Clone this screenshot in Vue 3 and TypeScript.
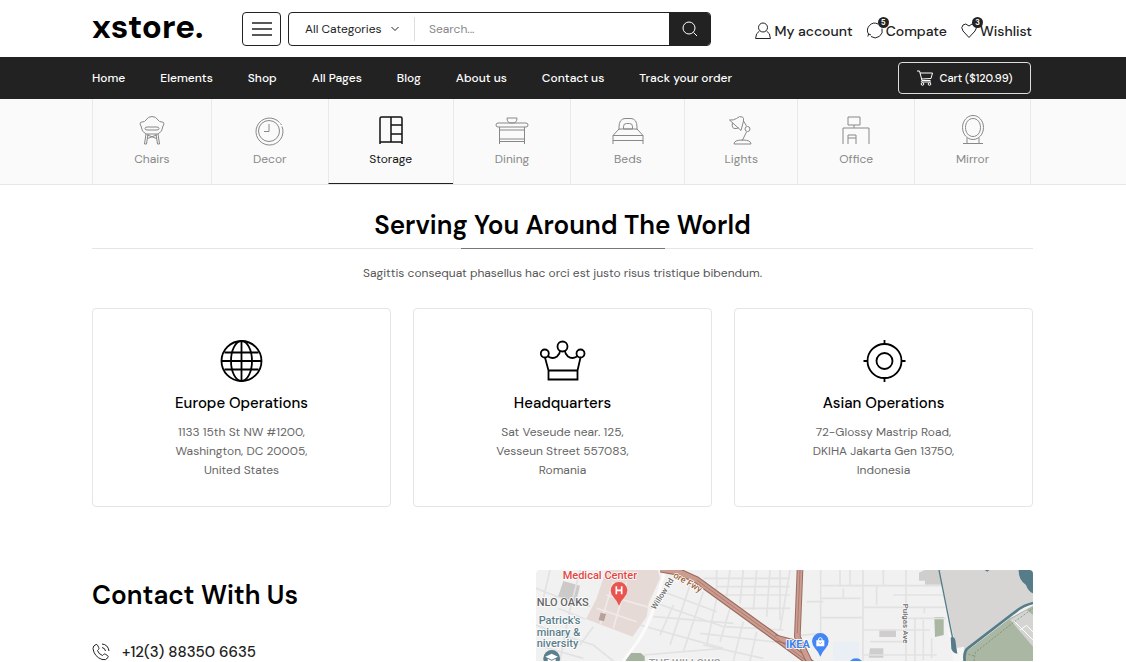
<script setup lang="ts">
import { ref } from 'vue'

interface Category {
  name: string
  icon: string
}

interface Office {
  title: string
  icon: 'globe' | 'crown' | 'target'
  lines: string[]
}

const links: string[] = ['Home', 'Elements', 'Shop', 'All Pages', 'Blog', 'About us', 'Contact us', 'Track your order']

// Outline of each category icon on a 36 x 36 grid
const categories: Category[] = [
  {
    name: 'Chairs',
    icon: 'M6 12q0-2 2-2q3 0 4-2q2-3.500 6-3.500t6 3.500q1 2 4 2q2 0 2 2l-1 2q-.5 6-5 8H12q-4.500-2-5-8zM13 15h10q2 0 2 1.500t-2 1.500H13q-2 0-2-1.500t2-1.500zM12 22l-1.500 10h2L14 22M24 22l1.500 10h-2L22 22M13.500 23l9 3.500M22.500 23l-9 3.500',
  },
  {
    name: 'Decor',
    icon: 'M30 14.500A13.500 13.500 0 1 1 27.500 10.500M28.500 11.500l1 1.500M17 8.500a10.500 10.500 0 1 1 0 21a10.500 10.500 0 1 1 0-21zM17 12v7.500H12',
  },
  {
    name: 'Storage',
    icon: 'M7 32V6.500q0-1.500 1.500-1.500h19q1.500 0 1.500 1.500V32M7 30h22M18 5v25M18 13h11M18 22h11',
  },
  {
    name: 'Dining',
    icon: 'M13 6h10q0 5-4 5h-2q-4 0-4-5zM4 11h28q2 0 2 2t-2 2H4q-2 0-2-2t2-2zM5.500 15v17M30.500 15v17M5.500 18h25M5.500 27h25M5.500 29.500h25',
  },
  {
    name: 'Beds',
    icon: 'M9 18v-3q0-8 6-8.500h6q6 .5 6 8.500v3M13.500 17v-2.500q0-3 3-3h3q3 0 3 3V17zM9 17h18l6 6.500H3zM3 32v-8.500h30V32M3 28.500h30',
  },
  {
    name: 'Lights',
    icon: 'M6.500 8q4 .5 7-1.500q3-3 6-1.500q1.500 1 1 4l-2.500 9.500zM9.500 11q-1.500 6 3.500 5.500q2 0 2.500-1M20.500 9l3 5M23.500 20l-4.500 9M24.500 14.500a2.500 2.500 0 1 1 0 5a2.500 2.500 0 1 1 0-5zM11 32q0-4 8.500-4t8.500 4z',
  },
  {
    name: 'Office',
    icon: 'M10 5h12v8H10zM16 13v3M5 32V16H31v16M10 32V23h8v9M10 26h8',
  },
  {
    name: 'Mirror',
    icon: 'M18 3.500c6 0 10.500 5.500 10.500 12s-4.500 12-10.500 12s-10.500-5.500-10.500-12s4.500-12 10.500-12zM18 6.500c4.500 0 7.500 4 7.500 9s-3 9-7.500 9s-7.500-4-7.500-9s3-9 7.500-9zM12 26v5M24 26v5M8 31.500h20',
  },
]

const offices: Office[] = [
  { title: 'Europe Operations', icon: 'globe', lines: ['1133 15th St NW #1200,', 'Washington, DC 20005,', 'United States'] },
  { title: 'Headquarters', icon: 'crown', lines: ['Sat Veseude near. 125,', 'Vesseun Street 557083,', 'Romania'] },
  { title: 'Asian Operations', icon: 'target', lines: ['72-Glossy Mastrip Road,', 'DKIHA Jakarta Gen 13750,', 'Indonesia'] },
]

const active = ref<string>('Storage')
const query = ref<string>('')
</script>

<template>
  <div class="page">
    <header class="top wrap">
      <a class="logo" href="#">xstore.</a>
      <button class="burger" type="button" aria-label="Menu">
        <svg width="20" height="14" viewBox="0 0 20 14"><path d="M0 1h20M0 7h20M0 13h20" /></svg>
      </button>
      <form class="search" role="search" @submit.prevent>
        <div class="pick">
          <select aria-label="Category">
            <option>All Categories</option>
          </select>
          <svg width="8" height="6" viewBox="0 0 8 6"><path d="M.5 1L4 4.500L7.500 1" /></svg>
        </div>
        <input v-model="query" type="text" placeholder="Search..." aria-label="Search" />
        <button type="submit" aria-label="Search">
          <svg width="16" height="16" viewBox="0 0 16 16"><circle cx="7" cy="7" r="6" /><path d="M11.500 11.500L15 15" /></svg>
        </button>
      </form>
      <div class="user">
        <a href="#">
          <svg width="16" height="18" viewBox="0 0 16 18"><circle cx="8" cy="5.500" r="4.500" /><path d="M4.500 9Q.6 11 .6 16.500h14.800Q15.400 11 11.500 9" /></svg>
          <span>My account</span>
        </a>
        <a href="#">
          <svg width="16" height="18" viewBox="0 0 16 18"><path d="M11 2A7.200 7.200 0 0 0 1.800 12.500M.8 14.500l.8-2.500 2.400 1M4 14.500A7.200 7.200 0 0 0 15 6.500" /></svg>
          <span>Compate</span>
          <i class="badge">5</i>
        </a>
        <a href="#">
          <svg width="16" height="18" viewBox="0 0 16 18"><path d="M8 15.500L2 9Q-.5 5.500 2 3T8 4Q11 .5 14 3t0 6z" /></svg>
          <span>Wishlist</span>
          <i class="badge">3</i>
        </a>
      </div>
    </header>

    <nav class="bar">
      <div class="wrap bar-in">
        <ul>
          <li v-for="l in links" :key="l"><a href="#">{{ l }}</a></li>
        </ul>
        <button class="cart" type="button">
          <svg width="16" height="16" viewBox="0 0 16 16">
            <path d="M0 1h2.500l2.500 9.500h8.500M3 3h12.500L14 8.500l-9.500.5M5 10.500q-1.500 1.500 0 1.500h9" />
            <circle cx="5.500" cy="14" r="1.300" /><circle cx="12.500" cy="14" r="1.300" />
          </svg>
          Cart ($120.99)
        </button>
      </div>
    </nav>

    <section class="cats" aria-label="Categories">
      <div class="wrap">
        <div class="cat-grid">
          <a v-for="c in categories" :key="c.name" href="#" :class="{ on: c.name === active }" @click.prevent="active = c.name">
            <svg width="36" height="36" viewBox="0 0 36 36"><path :d="c.icon" /></svg>
            <span>{{ c.name }}</span>
          </a>
        </div>
      </div>
    </section>

    <main class="wrap">
      <h1>Serving You Around The World</h1>
      <div class="rule"><span></span></div>
      <p class="lead">Sagittis consequat phasellus hac orci est justo risus tristique bibendum.</p>

      <div class="cards">
        <article v-for="o in offices" :key="o.title">
          <svg width="46" height="46" viewBox="0 0 46 46">
            <template v-if="o.icon === 'globe'">
              <circle cx="22.500" cy="23" r="20" />
              <ellipse cx="22.500" cy="23" rx="10.500" ry="20" />
              <path d="M22.500 3v40M2.500 23h40M5.500 14.500h34M5.500 31.500h34" />
            </template>
            <template v-else-if="o.icon === 'crown'">
              <circle cx="22.500" cy="8.500" r="5" /><circle cx="4.800" cy="15.500" r="4" /><circle cx="40.500" cy="15.500" r="4" />
              <path d="M5 19.500L8.500 32.500V41.500h29V32.500L40.500 19.500M8.500 32.500h29M8 18.500q5 3 9 0q3-2.500 3-5.500M37 18.500q-5 3-9 0q-3-2.500-3-5.500" />
            </template>
            <template v-else>
              <circle cx="23.500" cy="23" r="17" /><circle cx="23.500" cy="23" r="8" />
              <path d="M23.500 2v4M23.500 40v4M2.500 23h4M40.500 23h4" />
            </template>
          </svg>
          <h2>{{ o.title }}</h2>
          <p><template v-for="t in o.lines" :key="t">{{ t }}<br /></template></p>
        </article>
      </div>

      <div class="contact">
        <div>
          <h1 class="left">Contact With Us</h1>
          <a class="phone" href="tel:+123883506635">
            <svg width="18" height="18" viewBox="0 0 18 18">
              <path d="M4 1.500Q1 2.500 1 5.500q1 8 9 11q4 1.200 6-2q.6-1-.3-1.800l-2.400-1.500q-1-.6-1.800.3l-1 1Q6.500 11 5.500 7.500l1-1q.9-.8.3-1.800L5.500 2.200Q5 1.200 4 1.500zM10 1q6 .5 7 7M10 4.500q3 .5 3.500 3.500" />
            </svg>
            +12(3) 88350 6635
          </a>
        </div>
        <svg class="map" viewBox="18 15 1491 273" preserveAspectRatio="xMinYMin slice" role="img" aria-label="Map">
          <rect x="18" y="15" width="1491" height="273" fill="#f1f1f1" />
          <path fill="#e6dad7" d="M228 15H384L390 40L356 115L350 155L308 215L168 162L200 100z" />
          <path fill="#cbcac9" d="M100 48L150 62L138 110L84 96z" />
          <path fill="#a4b39d" d="M296 264h36l12 10v14h-58z" />
          <path fill="#cfcecd" d="M1048 194h50v22h-50zM1020 250h40v28h-44zM1185 15h52v44h-52v-12h-18v-24z" />
          <path fill="#e9eff4" d="M910 230h76v56h-76z" />
          <path fill="#a9b7a3" d="M1213 156h28v54l-26 6z" />
          <g class="road">
            <path d="M18 70L84 96L180 124M60 15L40 100M150 15L116 150L90 288M18 180L110 215L190 240L250 288M84 130L165 162M150 240l40-55" />
            <path class="faint" d="M250 50l-40 130M290 50l-40 140M228 90l140 40M200 130l120 40" />
            <path d="M20 240l140 40M340 270l240-20M330 180l250 70" />
            <path d="M380 115l200 70l180 10M370 155l240 20M480 60l-60 180M520 80l-60 180M400 80l160 60M560 100l-30 140M600 130l-30 100M640 170l-30 118M680 200l-20 88M430 120l-40 90M510 205l260 30M520 240l180 40" />
            <path d="M520 40h260M600 15l-10 80M640 15l-10 100M680 15l-10 120M560 15v60M720 15l-10 140M560 90h220M620 130h160M750 15v150M560 65h220" />
            <path d="M872 15v210M999 15v273M1128 15v273M872 62h380M872 158h128M999 127h245M872 100h120M1000 195h200M1128 160h120M1155 160v128M1180 165v120M1205 220v60M780 15l-30 180M830 110h50M930 15v50M960 15v45M940 70v30M870 206l-60 5M1040 60v60M1060 15v45M1183 125v20M1020 230h110M1000 270h220M1090 90h150" />
          </g>
          <path fill="#b7a19b" d="M212 143l16 4l-6 22l-16-4z" />
          <path class="road wide" d="M405 15Q380 110 360 160T308 250L280 288" />
          <path fill="#d6d5d4" d="M1228 15H1509V110Q1480 115 1450 145L1300 265V288L1275 235z" />
          <path fill="#f6f6f6" d="M1250 180L1276 250L1302 245V288h-32z" />
          <path fill="#a9b7a3" d="M1302 265L1440 160L1509 122V288H1302z" />
          <path fill="#d4d4d2" d="M1440 164L1490 135L1509 150V245z" />
          <path stroke="#fff" stroke-width="3" fill="none" d="M1452 168L1509 225M1470 195l20-14l19 20" />
          <path stroke="#738270" stroke-width="2" stroke-dasharray="6 5" fill="none" d="M1332 288L1336 262L1440 180L1509 130M1305 265l28 8" />
          <path stroke="#557c88" stroke-width="8" fill="none" d="M1509 114Q1480 120 1450 145L1316 248Q1300 258 1304 288" />
          <path stroke="#557c88" stroke-width="4" fill="none" d="M1227 15L1274 250" />
          <path fill="#557c88" d="M1262 218q10-6 14 8l6 40q-12 0-18-14zM1466 15h43V85Q1495 80 1488 60Q1465 45 1466 15zM1364 15h14l-6 5z" />
          <path stroke="#9b6d60" stroke-width="22" fill="none" d="M392 12L450 22L500 45L720 205L850 300" />
          <path stroke="#cb9c8f" stroke-width="15" fill="none" d="M392 12L450 22L500 45L720 205L850 300" />
          <path stroke="#9b6d60" stroke-width="20" fill="none" d="M810 15L802 215L840 295M735 218l70 18" />
          <path stroke="#cb9c8f" stroke-width="14" fill="none" d="M810 15L802 215L840 295M735 218l70 18" />
          <path stroke="#9b6d60" stroke-width="2" fill="none" d="M810 15L802 205M500 45L720 205L830 288" />
          <g class="label">
            <text x="98" y="43" class="red">Medical Center</text>
            <text x="20" y="123" class="area">NLO OAKS</text>
            <text x="26" y="178" class="slate">Patrick's</text>
            <text x="20" y="212" class="slate">minary &amp;</text>
            <text x="20" y="246" class="slate">niversity</text>
            <text x="356" y="305" class="area pale">THE WILLOWS</text>
            <text transform="translate(376 135) rotate(-58)" class="street">Willow Rd</text>
            <text transform="translate(428 36) rotate(30)" class="hwy">ore Fwy</text>
            <text transform="translate(1118 116) rotate(90)" class="street">Pulgas Ave</text>
            <text x="768" y="250" class="blue">IKEA</text>
          </g>
          <path fill="#e9544f" d="M267 51a25 25 0 0 1 25 25q0 12-10 22q-10 10-15 24q-5-14-15-24q-10-10-10-22a25 25 0 0 1 25-25z" />
          <path stroke="#fff" stroke-width="5" fill="none" d="M259 64v24M275 64v24M259 76h16" />
          <circle cx="65" cy="280" r="25" fill="#5b7f8c" />
          <path fill="#fff" d="M65 266l19 9l-19 9l-19-9zM53 281l12 6l12-6v7H53z" />
          <path fill="#4486f4" d="M871 204a25 25 0 0 1 25 25q0 12-10 22q-10 10-15 24q-5-14-15-24q-10-10-10-22a25 25 0 0 1 25-25z" />
          <path fill="#fff" d="M859 226h24v18h-24z" />
          <path stroke="#fff" stroke-width="3" fill="none" d="M865 227q0-9 6-9t6 9" />
          <path stroke="#4486f4" stroke-width="2" fill="none" d="M866 232q5 7 10 0" />
          <circle cx="978" cy="304" r="24" fill="#4486f4" />
        </svg>
      </div>
    </main>
  </div>
</template>

<style>
body {
  margin: 0;
  background: #fff;
}
</style>

<style scoped>
.page {
  font-family: "DM Sans", Inter, "Liberation Sans", sans-serif;
  color: #222;
  font-size: 12px;
}
.page * {
  box-sizing: border-box;
}
.page svg {
  fill: none;
  stroke: currentColor;
  flex: none;
}
a {
  color: inherit;
  text-decoration: none;
}
button,
input,
select {
  font: inherit;
  color: inherit;
}
.wrap {
  padding: 0 93px 0 92px;
}
.top {
  display: flex;
  align-items: center;
  height: 57px;
}
.logo {
  width: 150px;
  font-size: 33px;
  line-height: 40px;
  font-weight: 700;
  color: #000;
  padding-bottom: 4px;
}
.burger {
  width: 39px;
  height: 34px;
  padding: 0;
  display: grid;
  place-items: center;
  background: #fff;
  border: 1px solid #222;
  border-radius: 4px;
  margin-right: 7px;
}
.burger svg {
  stroke-width: 1.5;
}
.search {
  display: flex;
  flex: 1;
  max-width: 423px;
  height: 34px;
  border: 1px solid #222;
  border-radius: 4px;
  overflow: hidden;
  font-size: 13px;
}
.pick {
  position: relative;
  display: flex;
  align-items: center;
  width: 126px;
  margin: 4px 0;
  border-right: 1px solid #ddd;
  font-size: 12px;
}
.pick select {
  appearance: none;
  width: 100%;
  height: 24px;
  padding: 0 0 0 16px;
  border: 0;
  background: transparent;
}
.pick svg {
  position: absolute;
  right: 15px;
  pointer-events: none;
}
.search input {
  flex: 1;
  min-width: 0;
  border: 0;
  outline: 0;
  padding: 0 14px;
  font-size: 12px;
}
.search input::placeholder {
  color: #888;
}
.search button {
  width: 41px;
  border: 0;
  padding: 0;
  background: #222;
  color: #fff;
  display: grid;
  place-items: center;
}
.user {
  display: flex;
  gap: 14px;
  margin-left: auto;
  margin-right: 1px;
  font-size: 14px;
  font-weight: 500;
  padding-top: 4px;
}
.user a {
  position: relative;
  display: flex;
  align-items: center;
  gap: 3px;
  white-space: nowrap;
}
.badge {
  position: absolute;
  left: 11px;
  top: -5px;
  width: 11px;
  height: 11px;
  border-radius: 50%;
  background: #222;
  color: #fff;
  font: bold 7px/11px Inter, sans-serif;
  text-align: center;
}
.bar {
  background: #222;
  color: #fff;
}
.bar-in {
  display: flex;
  align-items: center;
  justify-content: space-between;
  height: 42px;
  font-weight: 500;
}
.bar ul {
  display: flex;
  gap: 35px;
  margin: 0;
  padding: 0;
  list-style: none;
  white-space: nowrap;
}
.cart {
  display: flex;
  align-items: center;
  justify-content: center;
  gap: 7px;
  width: 133px;
  height: 32px;
  margin-right: 2px;
  padding: 0;
  background: transparent;
  border: 1px solid #ddd;
  border-radius: 4px;
  font-size: 11px;
}
.cats {
  background: #fafafa;
  border-bottom: 1px solid #e6e6e6;
}
.cat-grid {
  display: grid;
  grid-template-columns: 119fr 117fr 125fr 118fr 114fr 113fr 117fr 116fr;
  margin-right: 2px;
  border-right: 1px solid #e9e9e9;
}
.cat-grid a {
  display: flex;
  flex-direction: column;
  align-items: center;
  height: 85px;
  padding-top: 13px;
  border-left: 1px solid #e9e9e9;
  color: #888;
  line-height: 22px;
}
.cat-grid a.on {
  color: #111;
  border-bottom: 1px solid #222;
}
.cat-grid .on svg {
  stroke-width: 1.5;
}
h1 {
  margin: 0;
  font-size: 26px;
  line-height: 32px;
  font-weight: 600;
  color: #000;
  text-align: center;
}
h1.left {
  text-align: left;
}
main h1:first-child {
  padding-top: 24px;
}
.rule {
  margin-top: 7px;
  border-top: 1px solid #e5e5e5;
}
.rule span {
  display: block;
  width: 204px;
  height: 1px;
  margin: -1px auto 0;
  background: #777;
}
.lead {
  margin: 14px 0 25px;
  line-height: 20px;
  text-align: center;
  color: #555;
}
.cards {
  display: grid;
  grid-template-columns: repeat(3, 1fr);
  gap: 22px;
}
.cards article {
  display: flex;
  flex-direction: column;
  align-items: center;
  border: 1px solid #e5e5e5;
  border-radius: 4px;
  padding: 29px 16px 26px;
  text-align: center;
}
.cards svg {
  color: #000;
  stroke-width: 1.8;
}
h2 {
  margin: 7px 0 8px;
  font-size: 15px;
  line-height: 24px;
  font-weight: 500;
  color: #000;
}
.cards p {
  margin: 0;
  line-height: 19px;
  color: #666;
}
.contact {
  display: grid;
  grid-template-columns: 444fr 497fr;
  margin-top: 63px;
}
.contact h1.left {
  padding-top: 9px;
}
.phone {
  display: flex;
  align-items: center;
  gap: 12px;
  margin-top: 31px;
  font-size: 15px;
  line-height: 20px;
  font-weight: 500;
}
.map {
  display: block;
  width: 100%;
  height: auto;
  border-radius: 4px 4px 0 0;
  overflow: hidden;
}
.page .map {
  stroke: none;
}
.road {
  stroke: #e2e2e2;
  stroke-width: 5;
}
.road.wide {
  stroke: #fbfbfb;
  stroke-width: 9;
}
.faint {
  stroke: #f1e9e7;
}
.label {
  font-family: Roboto, sans-serif;
  font-size: 33px;
  font-weight: 500;
  paint-order: stroke;
  stroke: #fff;
  stroke-width: 4px;
}
.red {
  fill: #e2463f;
}
.slate {
  fill: #5a7d8a;
}
.area {
  fill: #666;
}
.pale {
  fill: #999;
}
.street {
  fill: #6b6b6b;
  font-size: 24px;
}
.hwy {
  fill: #9a6240;
  font-size: 27px;
}
.blue {
  fill: #3b82f0;
  font-weight: 700;
}
</style>
